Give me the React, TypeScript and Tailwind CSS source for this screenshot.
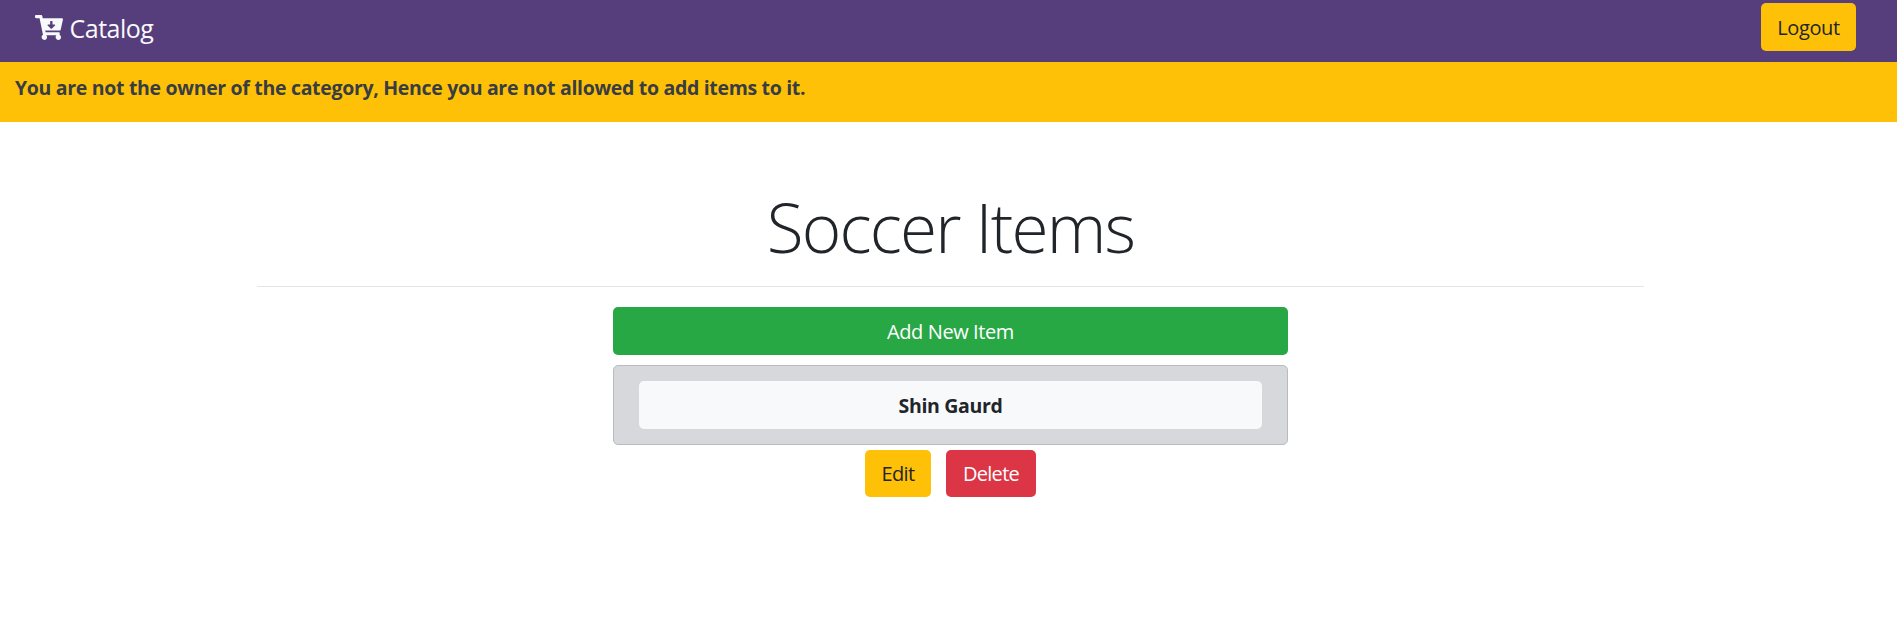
import { FaCartArrowDown } from "react-icons/fa";

export default function App() {
  return (
    <div className="min-h-[622px] bg-white font-['Open_Sans','Noto_Sans',sans-serif] text-[20px] leading-[30px] text-[#212529]">
      <nav className="flex h-[62px] items-start justify-between bg-[#563d7c] pr-[41px] pl-[35px]">
        <a href="#" className="flex pt-[15px] text-[25px] leading-[27px] text-[#f8f9fa]">
          <FaCartArrowDown className="h-[25px] w-[28px] shrink-0" />
          <span className="ml-[6.5px] tracking-[-0.5px]">Catalog</span>
        </a>
        <button className="mt-[3px] h-12 w-[95px] rounded-[5px] bg-[#ffc107] pt-[2px] tracking-[-0.4px]">Logout</button>
      </nav>
      <div className="h-[60px] bg-[#ffc107] pt-[11px] pl-[15px] text-[19.5px] font-bold text-[#383d41]">
        <span className="tracking-[-0.32px]">
          You are not the owner of the category, Hence you are not allowed to add items to it.
        </span>
      </div>
      <main className="mx-auto ml-[257px] w-[1387px] text-center">
        <h1 className="h-[165px] border-b border-[#e5e5e5] pt-[63px] text-[67.5px] leading-[84px] font-light">
          <span className="tracking-[-1.8px]">Soccer Items</span>
        </h1>
        <div className="mx-auto mt-5 w-[675px]">
          <button className="h-12 w-full rounded-[5px] bg-[#28a745] pt-px text-white">
            <span className="tracking-[-0.4px]">Add New Item</span>
          </button>
          <div className="mt-[10px] h-20 rounded-[5px] border border-[#babbbf] bg-[#d6d8db] px-[25px] py-[15px]">
            <button className="h-12 w-full rounded-[5px] bg-[#f8f9fa] pt-px text-[19.5px] font-bold">
              <span className="tracking-[-0.35px]">Shin Gaurd</span>
            </button>
          </div>
          <div className="mt-[5px] flex justify-center gap-[15px]">
            <button className="h-[47px] w-[66px] rounded-[5px] bg-[#ffc107] pt-px tracking-[-0.6px]">Edit</button>
            <button className="h-[47px] w-[90px] rounded-[5px] bg-[#dc3545] pt-px tracking-[-0.7px] text-white">Delete</button>
          </div>
        </div>
      </main>
    </div>
  );
}
